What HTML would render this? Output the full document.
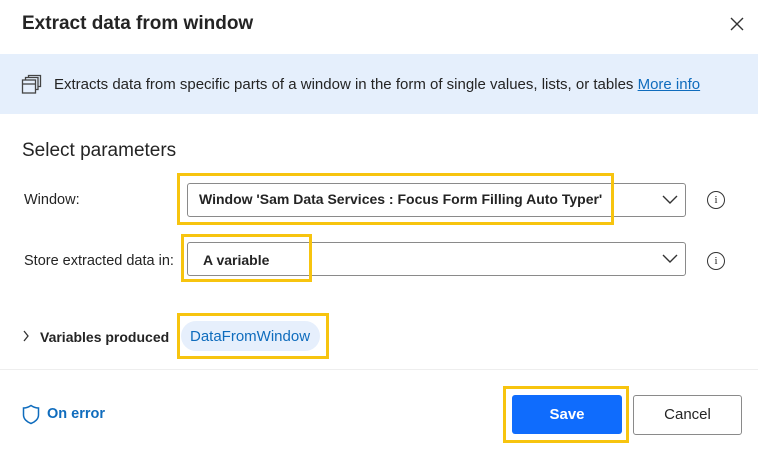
<!DOCTYPE html>
<html><head><style>
body{margin:0;width:758px;height:452px;background:#fff;font-family:"Liberation Sans",sans-serif;color:#242424;position:relative;overflow:hidden}
.a{position:absolute}
.dd{position:absolute;left:187px;width:499px;height:34px;border:1px solid #8a8a8a;border-radius:3px;box-sizing:border-box}
.y{position:absolute;border:3px solid #f7c40f;box-sizing:border-box}
.info{position:absolute;width:18px;height:18px;border:1.3px solid #333;border-radius:50%;box-sizing:border-box;font:11px "Liberation Serif",serif;text-align:center;line-height:16px}
</style></head><body>
<div class="a" style="left:22px;top:13px;font-size:19px;font-weight:bold;color:#242424">Extract data from window</div>
<svg class="a" style="left:729px;top:16px" width="16" height="16"><path d="M2 2L14 14M14 2L2 14" stroke="#333" stroke-width="1.4"/></svg>
<div class="a" style="left:0;top:54px;width:758px;height:60px;background:#e5effc"></div>
<svg class="a" style="left:21px;top:74px" width="21" height="21" fill="none" stroke="#444" stroke-width="1.3"><rect x="1.5" y="6" width="13" height="13"/><line x1="1.5" y1="10" x2="14.5" y2="10"/><path d="M4.5 6V3.5H17V15.5H14.5"/><path d="M7.5 3.5V1.5H19.5V12.5H17"/></svg>
<div class="a" style="left:54px;top:76px;font-size:15px;color:#242424">Extracts data from specific parts of a window in the form of single values, lists, or tables <span style="color:#0f6cbd;text-decoration:underline">More info</span></div>
<div class="a" style="left:22px;top:140px;font-size:19px">Select parameters</div>
<div class="a" style="left:24px;top:192px;font-size:14.5px">Window:</div>
<div class="dd" style="top:183px"></div>
<div class="a" style="left:199px;top:191px;font-size:14px;font-weight:bold">Window 'Sam Data Services : Focus Form Filling Auto Typer'</div>
<svg class="a" style="left:662px;top:195px" width="16" height="10"><path d="M1 1L8 8L15 1" stroke="#333" stroke-width="1.4" fill="none"/></svg>
<div class="y" style="left:177px;top:173px;width:437px;height:52px"></div>
<div class="info" style="left:707px;top:191px">i</div>
<div class="a" style="left:24px;top:253px;font-size:14.5px">Store extracted data in:</div>
<div class="dd" style="top:242px"></div>
<div class="a" style="left:203px;top:252px;font-size:14px;font-weight:bold">A variable</div>
<svg class="a" style="left:662px;top:254px" width="16" height="10"><path d="M1 1L8 8L15 1" stroke="#333" stroke-width="1.4" fill="none"/></svg>
<div class="y" style="left:181px;top:234px;width:131px;height:48px"></div>
<div class="info" style="left:707px;top:252px">i</div>
<svg class="a" style="left:22px;top:330px" width="8" height="12"><path d="M2 1L6 6L2 11" stroke="#333" stroke-width="1.3" fill="none"/></svg>
<div class="a" style="left:40px;top:329px;font-size:14px;font-weight:bold">Variables produced</div>
<div class="a" style="left:181px;top:321px;width:139px;height:30px;border-radius:15px;background:#e6effc"></div>
<div class="a" style="left:190px;top:328px;font-size:15px;color:#0f6cbd">DataFromWindow</div>
<div class="y" style="left:177px;top:313px;width:152px;height:46px"></div>
<div class="a" style="left:0;top:369px;width:758px;height:1px;background:#eee"></div>
<svg class="a" style="left:22px;top:404px" width="18" height="21" fill="none" stroke="#0f6cbd" stroke-width="1.5"><path d="M9 1.5C6 3.5 4 4 1.5 4V11C1.5 15 5 18 9 19.5C13 18 16.5 15 16.5 11V4C14 4 12 3.5 9 1.5Z"/></svg>
<div class="a" style="left:47px;top:406px;font-size:14.5px;font-weight:bold;color:#0f6cbd">On error</div>
<div class="a" style="left:512px;top:395px;width:110px;height:39px;background:#0f6cfd;border-radius:3px;color:#fff;font-weight:bold;font-size:15px;text-align:center;line-height:39px">Save</div>
<div class="y" style="left:503px;top:386px;width:126px;height:57px"></div>
<div class="a" style="left:633px;top:395px;width:109px;height:40px;border:1px solid #8a8a8a;border-radius:3px;box-sizing:border-box;font-size:15px;text-align:center;line-height:38px">Cancel</div>
</body></html>
